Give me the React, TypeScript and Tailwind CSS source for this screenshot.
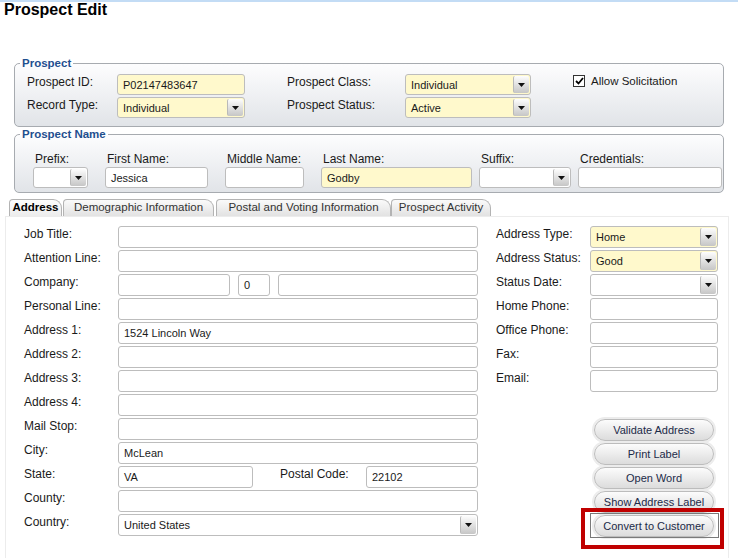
import React from "react";

// small dropdown button on the right end of a combo box
function Arrow() {
  return (
    <span className="m-px flex w-[16px] shrink-0 items-center justify-center rounded-[2px] border-l border-[#b9b9b9] bg-linear-to-b from-[#fdfdfd] to-[#c6c6c6]">
      <svg width="7" height="4" viewBox="0 0 7 4">
        <path d="M0 0h7L3.5 4z" fill="#111" />
      </svg>
    </span>
  );
}

function Box({
  className = "",
  value = "",
  yellow = false,
  select = false,
}: {
  className?: string;
  value?: string;
  yellow?: boolean;
  select?: boolean;
}) {
  return (
    <div
      className={`flex shrink-0 rounded-[3px] border border-[#bdbdbd] ${
        yellow ? "bg-[#fff9cc]" : "bg-white"
      } ${className}`}
    >
      <span className="flex flex-1 items-center overflow-hidden whitespace-nowrap pl-[5px] pt-px text-[11px] text-[#1a1a1a]">
        {value}
      </span>
      {select && <Arrow />}
    </div>
  );
}

function Label({ text, className = "" }: { text: string; className?: string }) {
  return (
    <span className={`shrink-0 pt-px text-[12px] leading-[14px] text-[#1a1a1a] ${className}`}>
      {text}
    </span>
  );
}

function Row({ label, value, select }: { label: string; value?: string; select?: boolean }) {
  return (
    <div className="flex h-[22px]">
      <Label text={label} className="w-[94px]" />
      <Box className="flex-1" value={value} select={select} />
    </div>
  );
}

function Tab({ text, className, active }: { text: string; className: string; active?: boolean }) {
  return (
    <div
      className={`flex h-[17px] shrink-0 items-center justify-center rounded-tl-[4px] rounded-tr-[9px] border border-b-0 border-[#b3b3b3] text-[11.5px] ${
        active
          ? "bg-linear-to-b from-[#fdfdfd] to-[#ececec] font-bold text-black"
          : "bg-linear-to-b from-[#fafafa] to-[#e2e2e2] text-[#333]"
      } ${className}`}
    >
      {text}
    </div>
  );
}

function Btn({ text }: { text: string }) {
  return (
    <div className="flex h-[22px] items-center justify-center whitespace-nowrap rounded-[11px] border border-[#bcbcbc] bg-linear-to-b from-[#fcfcfc] to-[#dcdcdc] text-[11px] text-[#1c2a48] shadow-[0_0_0_2px_#ececec]">
      {text}
    </div>
  );
}

export default function App() {
  return (
    <div className="relative h-[558px] w-[738px] overflow-hidden border-t-2 border-[#c3dcf5] bg-white font-['Liberation_Sans',Arial,sans-serif]">
      <h1 className="pl-[4px] text-[16px] font-bold leading-[16px] text-black">Prospect Edit</h1>

      {/* PROSPECT */}
      <fieldset className="ml-[14px] mt-[38px] w-[710px] rounded-[5px] border border-[#a7abb0] bg-linear-to-b from-[#fdfdfe] to-[#e1e4e8] pb-[8px] pl-[5px] pt-[4px]">
        <legend className="px-[2px] text-[11.5px] font-bold leading-[14px] text-[#1f4f8f]">Prospect</legend>
        <div className="flex flex-col gap-[2px] pl-[7px]">
          <div className="flex h-[21px]">
            <Label text="Prospect ID:" className="w-[90px]" />
            <Box className="w-[128px]" value="P02147483647" yellow />
            <Label text="Prospect Class:" className="ml-[42px] w-[118px]" />
            <Box className="w-[126px]" value="Individual" yellow select />
            <div className="ml-[42px] flex items-start pt-px">
              <span className="flex h-[12px] w-[12px] items-center justify-center border border-[#333] bg-white">
                <svg width="9" height="8" viewBox="0 0 9 8">
                  <path d="M1 4l2.5 2.5L8 1" fill="none" stroke="#000" strokeWidth="1.8" />
                </svg>
              </span>
              <span className="ml-[6px] text-[11.5px] leading-[12px] text-[#1a1a1a]">Allow Solicitation</span>
            </div>
          </div>
          <div className="flex h-[21px]">
            <Label text="Record Type:" className="w-[90px]" />
            <Box className="w-[128px]" value="Individual" yellow select />
            <Label text="Prospect Status:" className="ml-[42px] w-[118px]" />
            <Box className="w-[126px]" value="Active" yellow select />
          </div>
        </div>
      </fieldset>

      {/* PROSPECT NAME */}
      <fieldset className="ml-[14px] w-[710px] rounded-[5px] border border-[#a7abb0] bg-linear-to-b from-[#fdfdfe] to-[#e1e4e8] pb-[4px] pl-[5px] pt-[10px]">
        <legend className="px-[2px] text-[11.5px] font-bold leading-[14px] text-[#1f4f8f]">Prospect Name</legend>
        <div className="flex pl-[13px]">
          <div className="flex w-[55px] flex-col">
            <Label text="Prefix:" className="ml-[2px]" />
            <Box className="mt-px h-[21px]" select />
          </div>
          <div className="ml-[17px] flex w-[103px] flex-col">
            <Label text="First Name:" className="ml-[2px]" />
            <Box className="mt-px h-[21px]" value="Jessica" />
          </div>
          <div className="ml-[17px] flex w-[79px] flex-col">
            <Label text="Middle Name:" className="ml-[2px]" />
            <Box className="mt-px h-[21px]" />
          </div>
          <div className="ml-[17px] flex w-[151px] flex-col">
            <Label text="Last Name:" className="ml-[2px]" />
            <Box className="mt-px h-[21px]" value="Godby" yellow />
          </div>
          <div className="ml-[7px] flex w-[92px] flex-col">
            <Label text="Suffix:" className="ml-[2px]" />
            <Box className="mt-px h-[21px]" select />
          </div>
          <div className="ml-[7px] flex w-[144px] flex-col">
            <Label text="Credentials:" className="ml-[2px]" />
            <Box className="mt-px h-[21px]" />
          </div>
        </div>
      </fieldset>

      {/* TABS */}
      <div className="ml-[5px] mt-[6px] w-[724px]">
        <div className="flex h-[17px] pl-[4px]">
          <Tab text="Address" className="w-[53px]" active />
          <Tab text="Demographic Information" className="ml-px w-[151px]" />
          <Tab text="Postal and Voting Information" className="ml-[2px] w-[175px]" />
          <Tab text="Prospect Activity" className="w-[100px]" />
        </div>
        <div className="h-[345px] border border-[#ececec] bg-white">
          <div className="flex pl-[18px] pt-[9px]">
            <div className="flex w-[454px] flex-col gap-[2px]">
              <Row label="Job Title:" />
              <Row label="Attention Line:" />
              <div className="flex h-[22px]">
                <Label text="Company:" className="w-[94px]" />
                <Box className="w-[112px]" />
                <Box className="ml-[8px] w-[32px]" value="0" />
                <Box className="ml-[8px] flex-1" />
              </div>
              <Row label="Personal Line:" />
              <Row label="Address 1:" value="1524 Lincoln Way" />
              <Row label="Address 2:" />
              <Row label="Address 3:" />
              <Row label="Address 4:" />
              <Row label="Mail Stop:" />
              <Row label="City:" value="McLean" />
              <div className="flex h-[22px]">
                <Label text="State:" className="w-[94px]" />
                <Box className="w-[135px]" value="VA" />
                <Label text="Postal Code:" className="ml-[27px] w-[86px]" />
                <Box className="flex-1" value="22102" />
              </div>
              <Row label="County:" />
              <Row label="Country:" value="United States" select />
            </div>

            <div className="ml-[18px] flex w-[222px] flex-col gap-[2px]">
              <div className="flex h-[22px]">
                <Label text="Address Type:" className="w-[94px]" />
                <Box className="flex-1" value="Home" yellow select />
              </div>
              <div className="flex h-[22px]">
                <Label text="Address Status:" className="w-[94px]" />
                <Box className="flex-1" value="Good" yellow select />
              </div>
              <Row label="Status Date:" select />
              <Row label="Home Phone:" />
              <Row label="Office Phone:" />
              <Row label="Fax:" />
              <Row label="Email:" />

              <div className="ml-[98px] mt-[25px] flex w-[120px] flex-col gap-[2px]">
                <Btn text="Validate Address" />
                <Btn text="Print Label" />
                <Btn text="Open Word" />
                <Btn text="Show Address Label" />
                <div className="relative">
                  <Btn text="Convert to Customer" />
                  <span className="absolute -bottom-px -left-[4px] -right-[5px] -top-[2px] border border-[#7a7a7a]" />
                </div>
              </div>
            </div>
          </div>
        </div>
      </div>

      {/* annotation box */}
      <div className="absolute left-[581px] top-[506px] h-[41px] w-[143px] border-[4px] border-[#c00000]" />
    </div>
  );
}
